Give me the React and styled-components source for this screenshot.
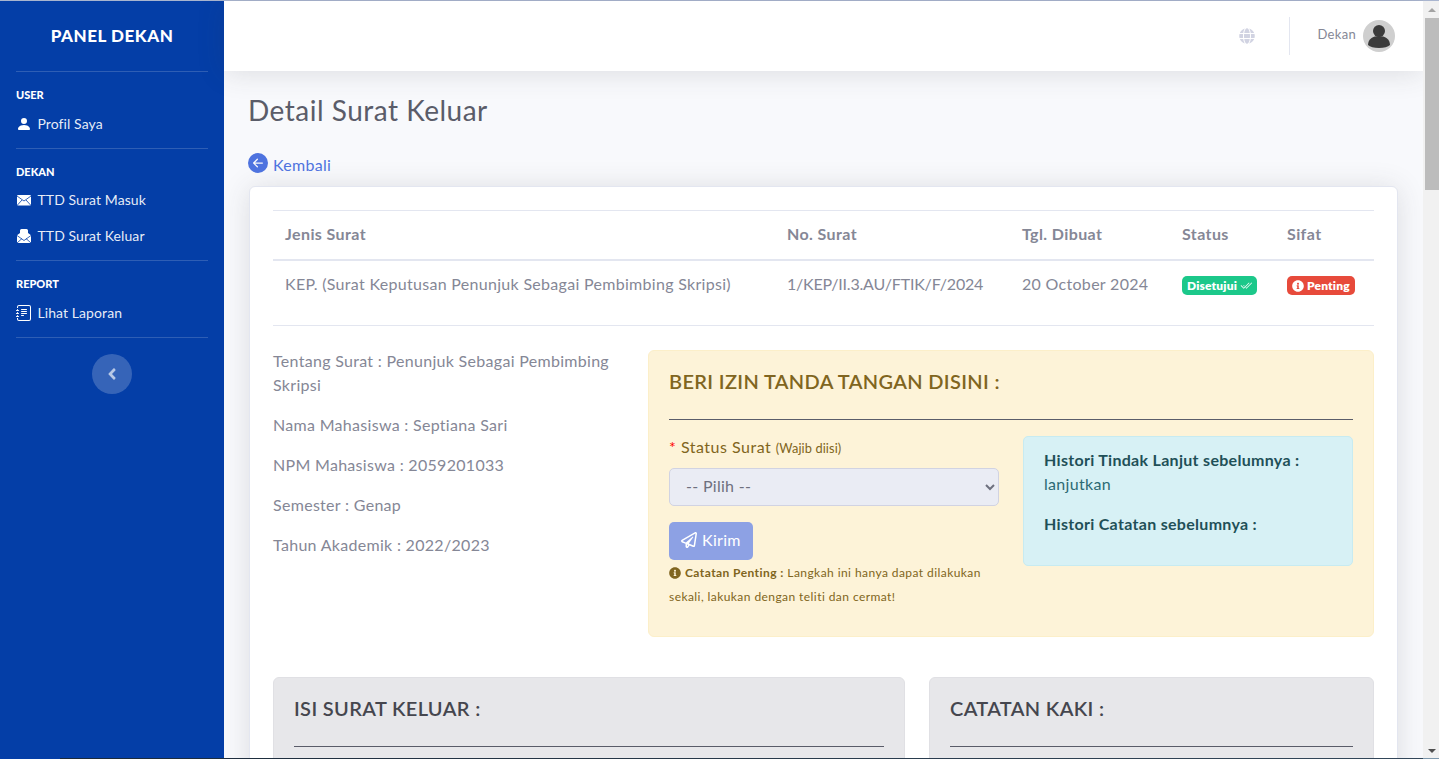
import React from "react";
import styled, { createGlobalStyle } from "styled-components";
import { FaGlobe, FaInfoCircle, FaRegPaperPlane, FaAngleLeft } from "react-icons/fa";
import { BsJournalText, BsCheck2All, BsPersonFill, BsArrowLeftCircleFill } from "react-icons/bs";

const GlobalStyle = createGlobalStyle`
  body {
    margin: 0;
    font-family: "Lato", "Noto Sans", sans-serif;
    font-size: 16px;
    line-height: 24px;
    color: #858796;
    letter-spacing: 0.3px;
    background: #f8f9fc;
  }
  * { box-sizing: border-box; }
`;

const Page = styled.div`
  display: flex;
  margin-right: 16px;
  border-top: 1px solid #a9b5cf;
`;

// the window's scrollbar, as it shows in the picture
const ScrollTrack = styled.div`
  position: fixed;
  top: 0;
  right: 0;
  bottom: 0;
  width: 16px;
  display: flex;
  flex-direction: column;
  align-items: flex-end;
  background: #f1f1f1;
  border-top: 1px solid #a9b5cf;
`;

const ScrollArrow = styled.div`
  width: 14px;
  height: 17px;
  flex-shrink: 0;
  display: flex;
  align-items: center;
  justify-content: center;
  &::before {
    content: "";
    border-left: 4px solid transparent;
    border-right: 4px solid transparent;
    ${(p) => (p.$down ? "border-top: 4px solid #505050;" : "border-bottom: 4px solid #a3a3a3;")}
  }
`;

const ScrollThumb = styled.div`
  width: 14px;
  height: 172px;
  background: #bcbcbc;
`;

const ScrollSpace = styled.div`
  flex: 1;
`;

const WindowEdge = styled.div`
  position: fixed;
  left: 0;
  right: 0;
  bottom: 0;
  height: 1px;
  background: linear-gradient(to right, #043ea7 60px, #1b2a3a 60px, #33475a 1423px, #7d97ab 1423px);
`;

const Sidebar = styled.aside`
  width: 224px;
  flex-shrink: 0;
  background: #043ea7;
  color: #fff;
  padding: 0 16px;
`;

const Brand = styled.div`
  height: 70px;
  display: flex;
  align-items: center;
  justify-content: center;
  font-size: 17px;
  font-weight: 900;
  letter-spacing: 0.55px;
`;

const SideRule = styled.hr`
  margin: 0;
  border: 0;
  border-top: 1px solid rgba(255, 255, 255, 0.17);
`;

const SideSection = styled.div`
  padding: 15px 0 6px;
`;

const SideHeading = styled.div`
  font-size: 11px;
  line-height: 16px;
  font-weight: 900;
  margin-bottom: ${(p) => (p.$tight ? "2px" : "3px")};
  letter-spacing: 0;
`;

const SideItem = styled.div`
  height: 36px;
  display: flex;
  align-items: center;
  gap: 5.5px;
  font-size: 14px;
  letter-spacing: 0.08px;
  color: rgba(255, 255, 255, 0.92);
  svg {
    width: 16px;
    height: 16px;
    color: #fff;
  }
`;

const MailIcon = styled.svg`
  flex-shrink: 0;
`;

const Toggle = styled.button`
  display: flex;
  align-items: center;
  justify-content: center;
  width: 40px;
  height: 40px;
  margin: 16px auto 0;
  padding: 0;
  border: 0;
  border-radius: 50%;
  background: rgba(255, 255, 255, 0.2);
  color: rgba(255, 255, 255, 0.65);
  font-size: 18px;
`;

const Content = styled.div`
  flex: 1;
  min-width: 0;
`;

const Topbar = styled.header`
  height: 70px;
  background: #fff;
  box-shadow: 0 2px 28px rgba(58, 59, 69, 0.15);
  display: flex;
  align-items: center;
  justify-content: flex-end;
  padding-right: 28px;
`;

const GlobeIcon = styled(FaGlobe)`
  width: 16px;
  height: 16px;
  color: #d1d3e2;
`;

const TopDivider = styled.div`
  width: 1px;
  height: 38px;
  background: #e3e6f0;
  margin: 0 28px 0 34px;
`;

const UserName = styled.span`
  font-size: 13px;
  margin: -5px 7px 0 0;
  color: #858796;
`;

const Avatar = styled.svg`
  width: 32px;
  height: 32px;
`;

const Main = styled.main`
  padding: 22px 25px 24px;
`;

const Title = styled.h1`
  margin: 0 0 26px -1px;
  font-size: 28px;
  line-height: 34px;
  font-weight: 400;
  letter-spacing: 0.5px;
  color: #5a5c69;
`;

const BackLink = styled.a`
  display: flex;
  align-items: center;
  gap: 5px;
  margin: 0 0 9px -1px;
  color: #4e73df;
  svg {
    width: 20px;
    height: 20px;
    margin-top: -4px;
  }
`;

const Card = styled.section`
  background: #fff;
  border: 1px solid #e3e6f0;
  border-radius: 6px;
  padding: 23px;
  box-shadow: 0 2px 28px rgba(58, 59, 69, 0.15);
`;

const Table = styled.table`
  width: 100%;
  table-layout: fixed;
  border-collapse: collapse;
  th,
  td {
    padding: 11px 12px 13px;
    text-align: left;
    border-top: 1px solid #e3e6f0;
    vertical-align: top;
    white-space: nowrap;
  }
  th {
    font-weight: 700;
    letter-spacing: 0.4px;
    border-bottom: 2px solid #e3e6f0;
  }
`;

const LetterNumber = styled.td`
  letter-spacing: -0.2px;
`;

const Badge = styled.span`
  display: inline-flex;
  align-items: center;
  gap: 3px;
  height: 19px;
  padding: 0 5px;
  border-radius: 5px;
  font-size: 12px;
  font-weight: 800;
  letter-spacing: 0.15px;
  color: #fff;
  background: ${(p) => p.$bg};
  vertical-align: middle;
  svg {
    width: 12px;
    height: 12px;
  }
`;

const Rule = styled.hr`
  margin: 16px 0 24px;
  border: 0;
  border-top: 1px solid #e3e6f0;
`;

const InfoGrid = styled.div`
  display: grid;
  grid-template-columns: 375px 1fr;
`;

const InfoList = styled.div`
  padding-right: 24px;
  margin-top: -1px;
  p {
    margin: 0 0 16px;
  }
`;

const Alert = styled.div`
  background: ${(p) => p.$bg};
  border: 1px solid ${(p) => p.$border};
  color: ${(p) => p.$color};
  border-radius: 6px;
  padding: 20px;
  min-height: ${(p) => p.$minHeight || "auto"};
`;

const AlertTitle = styled.h4`
  margin: -2px 0 26px;
  font-size: 20px;
  line-height: 24px;
  font-weight: 600;
  letter-spacing: 0.35px;
`;

const AlertRule = styled.hr`
  margin: 0 0 16px;
  border: 0;
  border-top: 1px solid #5a5c69;
`;

const FormRow = styled.div`
  display: grid;
  grid-template-columns: 330px 330px;
  gap: 24px;
  align-items: start;
`;

const FieldLabel = styled.label`
  display: block;
  margin: -1px 0 8px;
  letter-spacing: 0.5px;
  small {
    font-size: 12.8px;
    letter-spacing: 0.1px;
  }
`;

const Required = styled.span`
  color: red;
`;

const StatusSelect = styled.select`
  display: block;
  width: 100%;
  height: 38px;
  padding: 0 12px 3px;
  border: 1px solid #d1d3e2;
  border-radius: 5px;
  background: #eaecf4;
  color: #6e707e;
  font: inherit;
  letter-spacing: inherit;
`;

const SendButton = styled.button`
  display: flex;
  align-items: center;
  gap: 5px;
  height: 38px;
  margin-top: 16px;
  padding: 0 12px 3px;
  border: 0;
  border-radius: 5px;
  background: #8da1e4;
  color: #fff;
  font: inherit;
  letter-spacing: inherit;
  svg {
    width: 16px;
    height: 16px;
  }
`;

const Note = styled.div`
  font-size: 12px;
  line-height: 24px;
  padding-top: 1px;
  margin-bottom: 7px;
  letter-spacing: 0.43px;
  svg {
    width: 12px;
    height: 12px;
    vertical-align: -2px;
    margin-right: 4px;
  }
  strong {
    font-weight: 700;
  }
`;

const HistoryBox = styled.div`
  background: #d7f1f5;
  border: 1px solid #c7ebf1;
  border-radius: 5px;
  padding: 11px 20px 13px;
  color: #2c6a73;
  p {
    margin: 0 0 16px;
  }
  strong {
    font-weight: 700;
    color: #1f5058;
  }
`;

const LowerGrid = styled.div`
  display: grid;
  grid-template-columns: 632px 445px;
  gap: 24px;
  margin-top: 40px;
`;

export default function App() {
  return (
    <>
      <GlobalStyle />
      <Page>
        <Sidebar>
          <Brand>PANEL DEKAN</Brand>
          <SideRule />
          <SideSection>
            <SideHeading>USER</SideHeading>
            <SideItem>
              <BsPersonFill />
              Profil Saya
            </SideItem>
          </SideSection>
          <SideRule />
          <SideSection>
            <SideHeading $tight>DEKAN</SideHeading>
            <SideItem>
              <MailIcon viewBox="0 0 16 16">
                <rect x="1" y="3" width="14" height="10.5" rx="1" fill="#fff" />
                <path d="M1 4l7 5 7-5M1 13.5l5-5.5M15 13.5l-5-5.5" fill="none" stroke="#043ea7" strokeWidth="0.8" />
              </MailIcon>
              TTD Surat Masuk
            </SideItem>
            <SideItem>
              <MailIcon viewBox="0 0 16 16">
                <path d="M4 5V2.5Q4 1 5.5 1h5Q12 1 12 2.5V5l3 2.2V15H1V7.2z" fill="#fff" />
                <path d="M1 7.5l7 5 7-5M1 15l5-4.5M15 15l-5-4.5" fill="none" stroke="#043ea7" strokeWidth="0.8" />
              </MailIcon>
              TTD Surat Keluar
            </SideItem>
          </SideSection>
          <SideRule />
          <SideSection>
            <SideHeading>REPORT</SideHeading>
            <SideItem>
              <BsJournalText />
              Lihat Laporan
            </SideItem>
          </SideSection>
          <SideRule />
          <Toggle>
            <FaAngleLeft />
          </Toggle>
        </Sidebar>
        <Content>
          <Topbar>
            <GlobeIcon />
            <TopDivider />
            <UserName>Dekan</UserName>
            <Avatar viewBox="0 0 32 32">
              <circle cx="16" cy="16" r="16" fill="#cfcfcf" />
              <circle cx="16" cy="11" r="6" fill="#3a3a3a" />
              <path d="M5 25c0-6 5-9 11-9s11 3 11 9c-2 2-6 3-11 3s-9-1-11-3z" fill="#3a3a3a" />
            </Avatar>
          </Topbar>
          <Main>
            <Title>Detail Surat Keluar</Title>
            <BackLink>
              <BsArrowLeftCircleFill />
              Kembali
            </BackLink>
            <Card>
              <Table>
                <colgroup>
                  <col style={{ width: 502 }} />
                  <col style={{ width: 235 }} />
                  <col style={{ width: 160 }} />
                  <col style={{ width: 105 }} />
                  <col />
                </colgroup>
                <thead>
                  <tr>
                    <th>Jenis Surat</th>
                    <th>No. Surat</th>
                    <th>Tgl. Dibuat</th>
                    <th>Status</th>
                    <th>Sifat</th>
                  </tr>
                </thead>
                <tbody>
                  <tr>
                    <td>KEP. (Surat Keputusan Penunjuk Sebagai Pembimbing Skripsi)</td>
                    <LetterNumber>1/KEP/II.3.AU/FTIK/F/2024</LetterNumber>
                    <td>20 October 2024</td>
                    <td>
                      <Badge $bg="#1cc88a">
                        Disetujui
                        <BsCheck2All />
                      </Badge>
                    </td>
                    <td>
                      <Badge $bg="#e74a3b">
                        <FaInfoCircle />
                        Penting
                      </Badge>
                    </td>
                  </tr>
                </tbody>
              </Table>
              <Rule />
              <InfoGrid>
                <InfoList>
                  <p>Tentang Surat : Penunjuk Sebagai Pembimbing Skripsi</p>
                  <p>Nama Mahasiswa : Septiana Sari</p>
                  <p>NPM Mahasiswa : 2059201033</p>
                  <p>Semester : Genap</p>
                  <p>Tahun Akademik : 2022/2023</p>
                </InfoList>
                <Alert $bg="#fdf3d8" $border="#fcefc9" $color="#806520">
                  <AlertTitle>BERI IZIN TANDA TANGAN DISINI :</AlertTitle>
                  <AlertRule />
                  <FormRow>
                    <div>
                      <FieldLabel>
                        <Required>*</Required> Status Surat <small>(Wajib diisi)</small>
                      </FieldLabel>
                      <StatusSelect defaultValue="">
                        <option value="">-- Pilih --</option>
                      </StatusSelect>
                      <SendButton>
                        <FaRegPaperPlane />
                        Kirim
                      </SendButton>
                      <Note>
                        <FaInfoCircle />
                        <strong>Catatan Penting :</strong> Langkah ini hanya dapat dilakukan
                        <br />
                        sekali, lakukan dengan teliti dan cermat!
                      </Note>
                    </div>
                    <HistoryBox>
                      <p>
                        <strong>Histori Tindak Lanjut sebelumnya :</strong>
                        <br />
                        lanjutkan
                      </p>
                      <p>
                        <strong>Histori Catatan sebelumnya :</strong>
                      </p>
                    </HistoryBox>
                  </FormRow>
                </Alert>
              </InfoGrid>
              <LowerGrid>
                <Alert $bg="#e7e7ea" $border="#e0e0e4" $color="#45464e" $minHeight="2450px">
                  <AlertTitle>ISI SURAT KELUAR :</AlertTitle>
                  <AlertRule />
                </Alert>
                <Alert $bg="#e7e7ea" $border="#e0e0e4" $color="#45464e" $minHeight="2450px">
                  <AlertTitle>CATATAN KAKI :</AlertTitle>
                  <AlertRule />
                </Alert>
              </LowerGrid>
            </Card>
          </Main>
        </Content>
      </Page>
      <ScrollTrack>
        <ScrollArrow />
        <ScrollThumb />
        <ScrollSpace />
        <ScrollArrow $down />
      </ScrollTrack>
      <WindowEdge />
    </>
  );
}
